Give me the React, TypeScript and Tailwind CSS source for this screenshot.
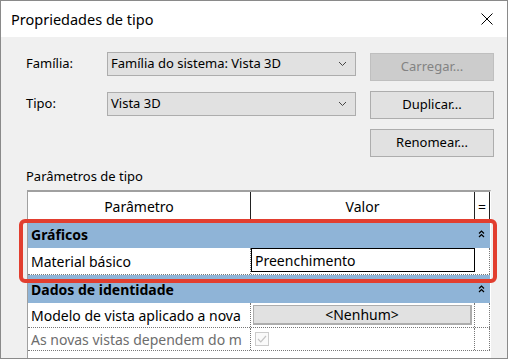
import React from 'react';

const ChevronDown = () => (
  <svg width="9" height="6" viewBox="0 0 9 6" className="text-[#444]">
    <path d="M1 1 L4.5 4.5 L8 1" fill="none" stroke="currentColor" strokeWidth="1" />
  </svg>
);

const Collapse = () => (
  <svg width="7" height="8" viewBox="0 0 7 8">
    <path d="M1 3.5 L3.5 1 L6 3.5 M1 7 L3.5 4.5 L6 7" fill="none" stroke="#000" strokeWidth="1.2" />
  </svg>
);

const Dropdown = ({ value }: { value: string }) => (
  <div className="flex h-[24px] w-[249px] items-center justify-between border border-[#adadad] bg-[#e1e1e1] pl-[3px] pr-[8px] text-[13px]">
    <span>{value}</span>
    <ChevronDown />
  </div>
);

const Btn = ({ label, disabled }: { label: string; disabled?: boolean }) => (
  <button
    className={
      disabled
        ? 'h-[28px] w-[124px] border border-[#bfbfbf] bg-[#cccccc] text-[13px] text-[#838383]'
        : 'h-[28px] w-[124px] border border-[#adadad] bg-[#e1e1e1] text-[13px] text-black'
    }
  >
    {label}
  </button>
);

export default function App() {
  return (
    <div className="relative h-[359px] w-[508px] overflow-hidden bg-white font-['Noto_Sans',sans-serif] text-black">
      <div className="flex h-full flex-col border border-[#8a8a8a]">
        {/* title bar */}
        <div className="flex h-[36px] shrink-0 items-center justify-between bg-white pl-[10px] pr-[14px]">
          <span className="text-[14.5px] leading-none">Propriedades de tipo</span>
          <svg width="12" height="12" viewBox="0 0 12 12">
            <path d="M0.5 0.5 L11.5 11.5 M11.5 0.5 L0.5 11.5" stroke="#000" strokeWidth="1" />
          </svg>
        </div>

        <div className="flex flex-1 flex-col bg-[#f0f0f0] pl-[25px]">
          <div className="flex">
            <div className="flex flex-col gap-[16px] pt-[15px]">
              <div className="flex items-center">
                <span className="w-[81px] text-[13px]">Família:</span>
                <Dropdown value="Família do sistema: Vista 3D" />
              </div>
              <div className="flex items-center">
                <span className="w-[81px] text-[13px]">Tipo:</span>
                <Dropdown value="Vista 3D" />
              </div>
            </div>
            <div className="ml-[14px] flex flex-col gap-[10px] pt-[16px]">
              <Btn label="Carregar..." disabled />
              <Btn label="Duplicar..." />
              <Btn label="Renomear..." />
            </div>
          </div>

          <div className="mt-[11px] text-[13px] leading-[16px]">Parâmetros de tipo</div>

          {/* table */}
          <div className="ml-[1px] mt-[6px] w-[464px] flex-1 border-l border-r border-t-[2px] border-l-[#a0a0a0] border-r-white border-t-[#a0a0a0] bg-white text-[14px]">
            <div className="flex h-[28px] items-center">
              <div className="flex h-full w-[223px] items-center justify-center border-r border-[#222]">Parâmetro</div>
              <div className="flex h-full w-[224px] items-center justify-center border-r border-[#222]">Valor</div>
              <div className="flex h-full w-[15px] items-center justify-center border-r border-[#222]">=</div>
            </div>

            <div className="flex h-[28px] items-center justify-between bg-[#8fb4d7] pl-[3px] pr-[5px]">
              <span className="font-bold">Gráficos</span>
              <Collapse />
            </div>

            <div className="flex h-[27px] border-b border-dotted border-[#777]">
              <div className="flex w-[223px] items-center border-r border-dotted border-[#777] pl-[3px]">Material básico</div>
              <div className="flex h-[24px] w-[224px] items-center border border-black bg-white pl-[3px]">Preenchimento</div>
              <div className="w-[15px] border-r border-dotted border-[#777]" />
            </div>

            <div className="flex h-[28px] items-center justify-between bg-[#8fb4d7] pl-[3px] pr-[5px]">
              <span className="font-bold">Dados de identidade</span>
              <Collapse />
            </div>

            <div className="flex h-[25px] border-b border-dotted border-[#777]">
              <div className="flex w-[223px] items-center whitespace-nowrap border-r border-dotted border-[#777] pl-[3px]">
                Modelo de vista aplicado a nova
              </div>
              <div className="flex w-[224px] items-center border-r border-dotted border-[#777] px-[2px] py-[2px]">
                <div className="flex h-full w-full items-center justify-center border border-b-2 border-r-2 border-[#adadad] bg-[#e1e1e1]">
                  &lt;Nenhum&gt;
                </div>
              </div>
              <div className="w-[15px] border-r border-dotted border-[#777]" />
            </div>

            <div className="flex h-[23px] border-b border-dotted border-[#777]">
              <div className="flex w-[223px] items-center whitespace-nowrap border-r border-dotted border-[#777] pl-[3px] text-[#6d6d6d]">
                As novas vistas dependem do m
              </div>
              <div className="flex w-[224px] items-center border-r border-dotted border-[#777] pl-[4px]">
                <div className="flex h-[14px] w-[14px] items-center justify-center border border-[#cccccc] bg-[#fafafa]">
                  <svg width="10" height="8" viewBox="0 0 10 8">
                    <path d="M1 4 L3.8 6.8 L9 1" fill="none" stroke="#c4c4c4" strokeWidth="1.2" />
                  </svg>
                </div>
              </div>
              <div className="w-[15px] border-r border-dotted border-[#777]" />
            </div>
          </div>
        </div>
      </div>

      {/* annotation highlight */}
      <div className="absolute left-[19px] top-[219px] h-[64px] w-[478px] rounded-[6px] border-[4px] border-[#e23e2f]" />
    </div>
  );
}
